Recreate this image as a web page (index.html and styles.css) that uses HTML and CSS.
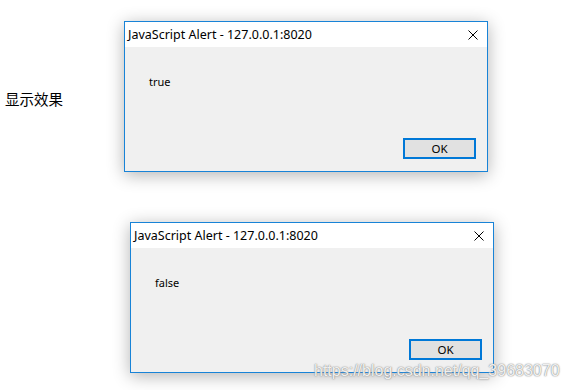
FILE: index.html
```html
<!DOCTYPE HTML>
<html lang="zh-CN">
<head>
	<meta charset="UTF-8" />
	<title>显示效果</title>
	<link rel="stylesheet" href="styles.css">
</head>
<body>

	<div class="page">
		<div class="row">
			<div class="label">显示效果</div>
			<div class="alert">
				<div class="alert-title">
					<span>JavaScript Alert - 127.0.0.1:8020</span>
					<svg class="close" width="10" height="10" viewBox="0 0 10 10">
						<path d="M0.5 0.5 L9.5 9.5 M9.5 0.5 L0.5 9.5" stroke="#000" stroke-width="1" fill="none" />
					</svg>
				</div>
				<div class="alert-body">
					<p class="message">true</p>
					<div class="actions"><button class="ok">OK</button></div>
				</div>
			</div>
		</div>

		<div class="alert second">
			<div class="alert-title">
				<span>JavaScript Alert - 127.0.0.1:8020</span>
				<svg class="close" width="10" height="10" viewBox="0 0 10 10">
					<path d="M0.5 0.5 L9.5 9.5 M9.5 0.5 L0.5 9.5" stroke="#000" stroke-width="1" fill="none" />
				</svg>
			</div>
			<div class="alert-body">
				<p class="message">false</p>
				<div class="actions"><button class="ok">OK</button></div>
			</div>
		</div>

		<div class="watermark">https://blog.csdn.net/qq_39683070</div>
	</div>

</body>
</html>
```

FILE: styles.css
```css
* {
	margin: 0;
	padding: 0;
	box-sizing: border-box;
}
body {
	background-color: #fff;
	font-family: "Segoe UI", "Noto Sans", "Noto Sans CJK SC", sans-serif;
	color: #000;
}
.page {
	position: relative;
	width: 567px;
	height: 390px;
	padding-top: 21px;
}
.row {
	display: flex;
}
.label {
	width: 124px;
	padding: 68px 0 0 5px;
	font-family: "Noto Sans CJK SC", sans-serif;
	font-size: 14.5px;
	line-height: 20px;
}
.alert {
	width: 364px;
	height: 151px;
	border: 1px solid #1883d7;
	background-color: #f0f0f0;
	box-shadow: 0 3px 16px rgba(0, 0, 0, 0.3);
	display: flex;
	flex-direction: column;
}
.second {
	margin: 50px 0 0 130px;
}
.alert-title {
	height: 25px;
	background-color: #fff;
	display: flex;
	align-items: center;
	justify-content: space-between;
	padding: 0 9px 0 3px;
	font-size: 12.5px;
}
.alert-body {
	flex: 1;
	display: flex;
	flex-direction: column;
	padding: 0 11px 12px 24px;
}
.message {
	font-size: 11px;
	line-height: 14px;
	padding-top: 28px;
	flex: 1;
}
.actions {
	display: flex;
	justify-content: flex-end;
}
.ok {
	width: 73px;
	height: 21px;
	border: 2px solid #0078d7;
	background-color: #e1e1e1;
	font-family: inherit;
	font-size: 11.5px;
	color: #000;
}
.watermark {
	position: absolute;
	left: 314px;
	top: 362px;
	font-family: "Liberation Sans", sans-serif;
	font-size: 16px;
	color: rgba(255, 255, 255, 0.9);
	text-shadow: 0 0 1px #777, 0 0 2px #aaa;
}
```
